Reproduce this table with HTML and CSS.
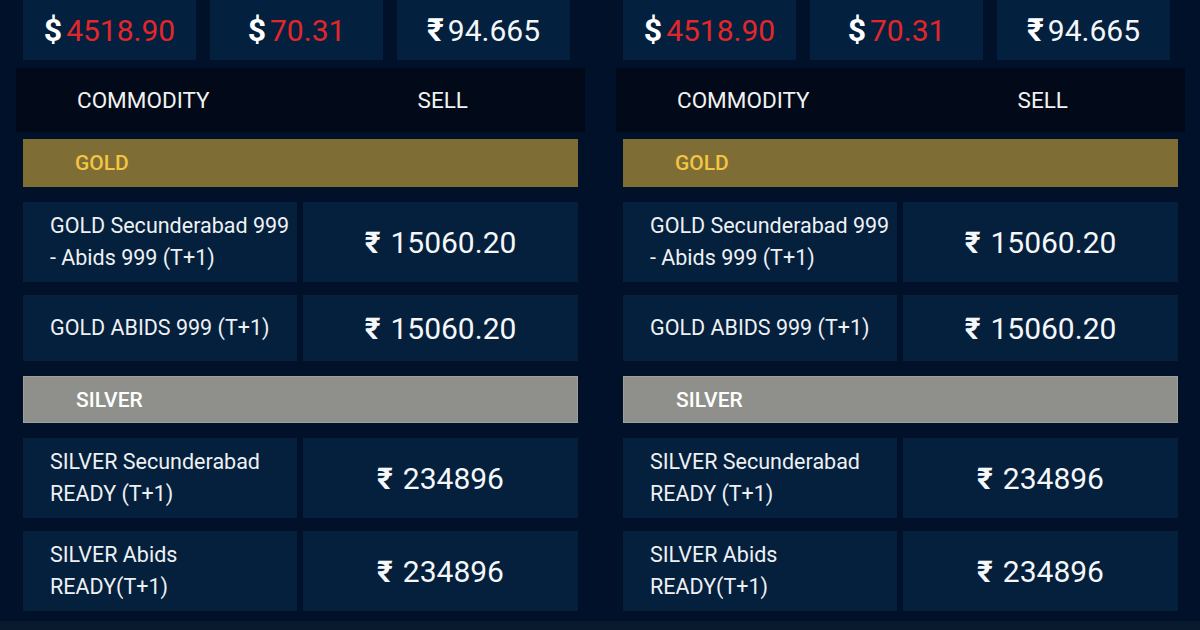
FILE: index.html
```html
<!DOCTYPE html>
<html>
<head>
<meta charset="utf-8">
<link rel="stylesheet" href="styles.css">
</head>
<body>
<div class="screen">
  <section class="panel">
    <div class="rates">
      <div class="rate"><span class="sym">$</span><span class="red">4518.90</span></div>
      <div class="rate"><span class="sym">$</span><span class="red">70.31</span></div>
      <div class="rate"><span class="sym">₹</span><span class="white">94.665</span></div>
    </div>
    <div class="thead">
      <div class="th th-left">COMMODITY</div>
      <div class="th th-right">SELL</div>
    </div>
    <div class="group gold">GOLD</div>
    <div class="row tall">
      <div class="name">GOLD Secunderabad 999<br>- Abids 999 (T+1)</div>
      <div class="price"><span class="rs">₹</span><span class="amt">15060.20</span></div>
    </div>
    <div class="row short">
      <div class="name">GOLD ABIDS 999 (T+1)</div>
      <div class="price"><span class="rs">₹</span><span class="amt">15060.20</span></div>
    </div>
    <div class="group silver">SILVER</div>
    <div class="row tall">
      <div class="name">SILVER Secunderabad<br>READY (T+1)</div>
      <div class="price"><span class="rs">₹</span><span class="amt">234896</span></div>
    </div>
    <div class="row tall">
      <div class="name">SILVER Abids<br>READY(T+1)</div>
      <div class="price"><span class="rs">₹</span><span class="amt">234896</span></div>
    </div>
  </section>
  <section class="panel">
    <div class="rates">
      <div class="rate"><span class="sym">$</span><span class="red">4518.90</span></div>
      <div class="rate"><span class="sym">$</span><span class="red">70.31</span></div>
      <div class="rate"><span class="sym">₹</span><span class="white">94.665</span></div>
    </div>
    <div class="thead">
      <div class="th th-left">COMMODITY</div>
      <div class="th th-right">SELL</div>
    </div>
    <div class="group gold">GOLD</div>
    <div class="row tall">
      <div class="name">GOLD Secunderabad 999<br>- Abids 999 (T+1)</div>
      <div class="price"><span class="rs">₹</span><span class="amt">15060.20</span></div>
    </div>
    <div class="row short">
      <div class="name">GOLD ABIDS 999 (T+1)</div>
      <div class="price"><span class="rs">₹</span><span class="amt">15060.20</span></div>
    </div>
    <div class="group silver">SILVER</div>
    <div class="row tall">
      <div class="name">SILVER Secunderabad<br>READY (T+1)</div>
      <div class="price"><span class="rs">₹</span><span class="amt">234896</span></div>
    </div>
    <div class="row tall">
      <div class="name">SILVER Abids<br>READY(T+1)</div>
      <div class="price"><span class="rs">₹</span><span class="amt">234896</span></div>
    </div>
  </section>
</div>
<div class="footer-strip"></div>
</body>
</html>
```
FILE: styles.css
```css
html, body {
  margin: 0;
  padding: 0;
}
body {
  width: 1200px;
  height: 630px;
  overflow: hidden;
  background: #01112a;
  font-family: Roboto, "Noto Sans", "DejaVu Sans", sans-serif;
  color: #ffffff;
}
.screen {
  display: flex;
  height: 621px;
}
.panel {
  width: 600px;
  display: flex;
  flex-direction: column;
  box-sizing: border-box;
}
.rates {
  display: flex;
  gap: 14px;
  padding-left: 23px;
  height: 60px;
}
.rate {
  width: 173px;
  height: 60px;
  background: #03203f;
  display: flex;
  align-items: center;
  justify-content: center;
  font-size: 30px;
  gap: 4px;
}
.sym {
  font-weight: 700;
  font-size: 32px;
  color: #ffffff;
}
.red {
  color: #e3262a;
}
.white {
  color: #f4f6f8;
}
.thead {
  margin: 8px 0 0 16px;
  width: 569px;
  height: 64px;
  background: #020a19;
  display: grid;
  grid-template-columns: 1fr 1fr;
  align-items: center;
  font-size: 22.5px;
  color: #f2f2f2;
}
.th-left {
  padding-left: 61px;
}
.th-right {
  text-align: center;
}
.group {
  margin: 7px 0 0 23px;
  width: 555px;
  height: 48px;
  box-sizing: border-box;
  padding-left: 52px;
  display: flex;
  align-items: center;
  font-size: 21px;
  font-weight: 500;
}
.gold {
  background: #7e6d35;
  color: #f4c542;
}
.silver {
  margin-top: 15px;
  height: 47px;
  background: #8f908b;
  color: #ffffff;
  border: 1px solid #9ea09a;
}
.row {
  display: grid;
  grid-template-columns: 274px 275px;
  gap: 6px;
  margin-left: 23px;
  width: 555px;
}
.group + .row {
  margin-top: 15px;
}
.row + .row {
  margin-top: 13px;
}
.tall {
  height: 80px;
}
.short {
  height: 66px;
}
.name, .price {
  background: #04203d;
  display: flex;
  align-items: center;
}
.name {
  padding-left: 27px;
  font-size: 21.5px;
  line-height: 32px;
  color: #eef0f3;
}
.price {
  justify-content: center;
  font-size: 30px;
  color: #f5f7f9;
  gap: 10px;
}
.rs {
  font-weight: 700;
}
.footer-strip {
  height: 9px;
  background: #0a1a2e;
}
```
